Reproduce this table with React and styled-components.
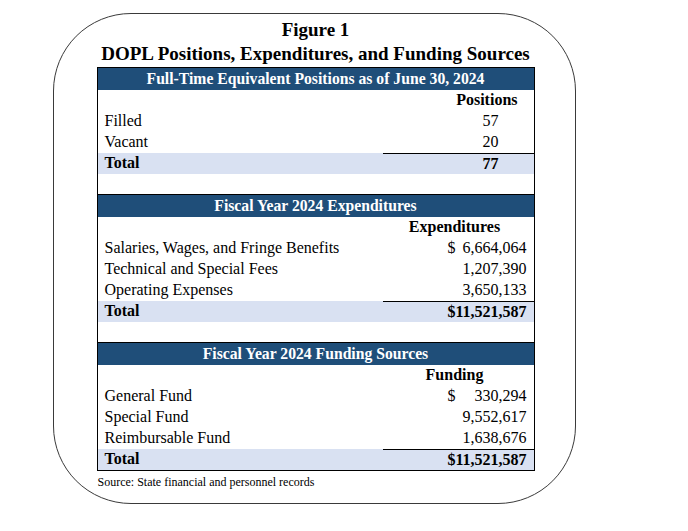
import React from 'react'
import styled, { createGlobalStyle } from 'styled-components'

const GlobalStyle = createGlobalStyle`
  body {
    margin: 0;
    background: #fff;
    font-family: "Liberation Serif", "Times New Roman", serif;
    color: #000;
  }
`

const Page = styled.div`
  width: 688px;
  height: 531px;
  padding: 13px 0 0 53px;
  box-sizing: border-box;
`

const Frame = styled.div`
  width: 523px;
  height: 491px;
  box-sizing: border-box;
  border: 1.5px solid #3a3a3a;
  border-radius: 78px;
  padding: 4px 0 0 42.5px;
`

const Title = styled.div`
  width: 438px;
  text-align: center;
  font-weight: bold;
  font-size: 19px;
  line-height: 24px;
`

const Table = styled.div`
  width: 438px;
  margin-top: 1px;
  box-sizing: border-box;
  border: 1px solid #000;
  border-top: none;
`

const SectionHead = styled.div`
  height: 22px;
  line-height: 22px;
  background: #1f4e79;
  border-top: 1px solid #000;
  color: #fff;
  font-weight: bold;
  font-size: 15.7px;
  text-align: center;
`

const Row = styled.div`
  display: flex;
  height: 21px;
  line-height: 20px;
  font-size: 16px;
  background: ${p => (p.$total ? '#d9e1f2' : 'transparent')};
  font-weight: ${p => (p.$total ? 'bold' : 'normal')};
`

const Spacer = styled.div`
  height: 20px;
`

const Label = styled.div`
  flex: 1;
  padding-left: 7px;
  white-space: nowrap;
`

const ValueCell = styled.div`
  width: 151px;
  box-sizing: border-box;
  display: flex;
  justify-content: ${p => p.$align || 'flex-end'};
  padding-right: ${p => p.$padRight || 7}px;
  padding-left: ${p => p.$padLeft || 0}px;
  border-top: ${p => (p.$rule ? '1px solid #000' : 'none')};
  font-weight: ${p => (p.$bold ? 'bold' : 'inherit')};
`

const Money = styled.div`
  flex: 1;
  display: flex;
  justify-content: ${p => (p.$dollar ? 'space-between' : 'flex-end')};
`

const Source = styled.div`
  font-size: 12px;
  line-height: 16px;
  margin-top: 3px;
  padding-left: 1px;
`

const positions = [
  ['Filled', '57'],
  ['Vacant', '20'],
]

const expenditures = [
  ['Salaries, Wages, and Fringe Benefits', '6,664,064', true],
  ['Technical and Special Fees', '1,207,390'],
  ['Operating Expenses', '3,650,133'],
]

const funding = [
  ['General Fund', '330,294', true],
  ['Special Fund', '9,552,617'],
  ['Reimbursable Fund', '1,638,676'],
]

const MoneySection = ({ title, column, rows, total }) => (
  <>
    <SectionHead>{title}</SectionHead>
    <Row>
      <Label />
      <ValueCell $align="center" $padRight={0} $bold>{column}</ValueCell>
    </Row>
    {rows.map(([label, value, dollar]) => (
      <Row key={label}>
        <Label>{label}</Label>
        <ValueCell $padLeft={65}>
          <Money $dollar={dollar}>
            {dollar && <span>$</span>}
            <span>{value}</span>
          </Money>
        </ValueCell>
      </Row>
    ))}
    <Row $total>
      <Label>Total</Label>
      <ValueCell $rule>{total}</ValueCell>
    </Row>
  </>
)

export default function App() {
  return (
    <Page>
      <GlobalStyle />
      <Frame>
        <Title>Figure 1</Title>
        <Title>DOPL Positions, Expenditures, and Funding Sources</Title>
        <Table>
          <SectionHead>Full-Time Equivalent Positions as of June 30, 2024</SectionHead>
          <Row>
            <Label />
            <ValueCell $padRight={16} $bold>Positions</ValueCell>
          </Row>
          {positions.map(([label, value]) => (
            <Row key={label}>
              <Label>{label}</Label>
              <ValueCell $padRight={35}>{value}</ValueCell>
            </Row>
          ))}
          <Row $total>
            <Label>Total</Label>
            <ValueCell $rule $padRight={35}>77</ValueCell>
          </Row>
          <Spacer />
          <MoneySection
            title="Fiscal Year 2024 Expenditures"
            column="Expenditures"
            rows={expenditures}
            total="$11,521,587"
          />
          <Spacer />
          <MoneySection
            title="Fiscal Year 2024 Funding Sources"
            column="Funding"
            rows={funding}
            total="$11,521,587"
          />
        </Table>
        <Source>Source: State financial and personnel records</Source>
      </Frame>
    </Page>
  )
}
